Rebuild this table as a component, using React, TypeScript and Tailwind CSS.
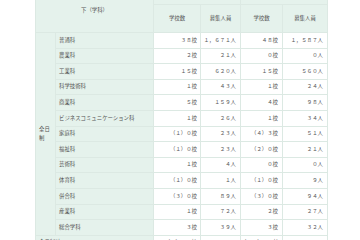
import React from "react";

const rows: string[][] = [
  ["普通科", "３８校", "１，６７１人", "４８校", "１，５８７人"],
  ["農業科", "２校", "２１人", "０校", "０人"],
  ["工業科", "１５校", "６２０人", "１５校", "５６０人"],
  ["科学技術科", "１校", "４３人", "１校", "２４人"],
  ["商業科", "５校", "１５９人", "４校", "９８人"],
  ["ビジネスコミュニケーション科", "１校", "２６人", "１校", "３４人"],
  ["家庭科", "（１）０校", "２３人", "（４）３校", "５１人"],
  ["福祉科", "（１）０校", "２３人", "（２）０校", "２１人"],
  ["芸術科", "１校", "４人", "０校", "０人"],
  ["体育科", "（１）０校", "１人", "（１）０校", "９人"],
  ["併合科", "（３）０校", "８９人", "（３）０校", "９４人"],
  ["産業科", "１校", "７２人", "２校", "２７人"],
  ["総合学科", "３校", "３９人", "３校", "３２人"],
];

const bd = "border border-[#dce9e3]";
const green = "bg-[#e5f2ec]";

export default function App() {
  return (
    <div className="w-[360px] h-[240px] overflow-hidden bg-white font-['Noto_Sans_CJK_JP','Noto_Sans',sans-serif] text-[#555]">
      <table className="ml-[35px] -mt-[12px] w-[292px] table-fixed border-collapse text-[5.4px] leading-none">
        <colgroup>
          <col className="w-[20px]" />
          <col className="w-[98px]" />
          <col className="w-[47px]" />
          <col className="w-[40px]" />
          <col className="w-[42px]" />
          <col className="w-[45px]" />
        </colgroup>
        <thead>
          <tr className="h-[15.5px]">
            <th colSpan={2} rowSpan={2} className={`${bd} ${green} font-normal text-center align-middle`}>
              下（学科）
            </th>
            <th colSpan={2} className={`${bd} ${green} font-normal text-center`}></th>
            <th colSpan={2} className={`${bd} ${green} font-normal text-center`}></th>
          </tr>
          <tr className="h-[28.5px]">
            <th className={`${bd} ${green} font-normal text-center`}>学校数</th>
            <th className={`${bd} ${green} font-normal text-center`}>募集人員</th>
            <th className={`${bd} ${green} font-normal text-center`}>学校数</th>
            <th className={`${bd} ${green} font-normal text-center`}>募集人員</th>
          </tr>
        </thead>
        <tbody>
          {rows.map((r, i) => (
            <tr key={r[0]} className="h-[15.6px]">
              {i === 0 && (
                <td rowSpan={rows.length} className={`${bd} ${green} pl-[3px] pr-[2px] align-middle leading-[1.6] text-[#555]`}>
                  全日制
                </td>
              )}
              <td className={`${bd} ${green} pl-[3px] text-left whitespace-nowrap`}>{r[0]}</td>
              <td className={`${bd} bg-white pr-[3px] text-right whitespace-nowrap`}>{r[1]}</td>
              <td className={`${bd} bg-white pr-[4px] text-right whitespace-nowrap`}>{r[2]}</td>
              <td className={`${bd} bg-white pr-[4px] text-right whitespace-nowrap`}>{r[3]}</td>
              <td className={`${bd} bg-white pr-[4px] text-right whitespace-nowrap`}>{r[4]}</td>
            </tr>
          ))}
          <tr className="h-[15.6px]">
            <td colSpan={2} className={`${bd} ${green} pl-[3px] text-left`}>全日制計</td>
            <td className={`${bd} bg-white pr-[3px] text-right whitespace-nowrap`}>（６）６７校</td>
            <td className={`${bd} bg-white pr-[4px] text-right whitespace-nowrap`}>２，７９１人</td>
            <td className={`${bd} bg-white pr-[4px] text-right whitespace-nowrap`}>（１１）７７校</td>
            <td className={`${bd} bg-white pr-[4px] text-right whitespace-nowrap`}>２，５３７人</td>
          </tr>
        </tbody>
      </table>
    </div>
  );
}
